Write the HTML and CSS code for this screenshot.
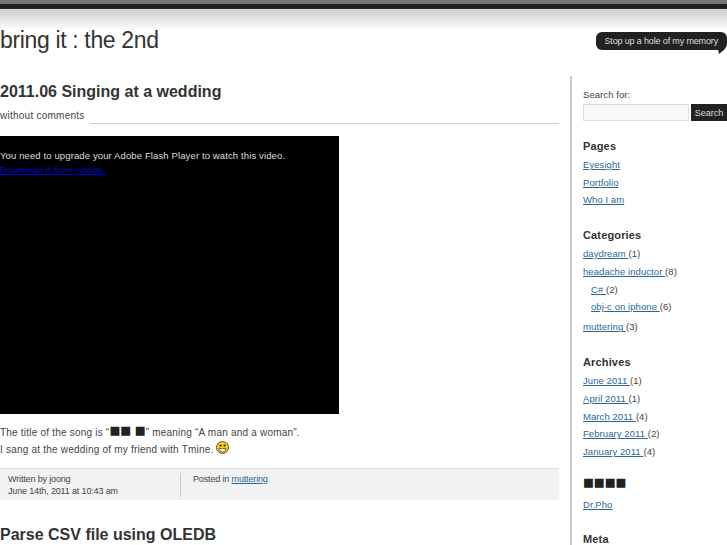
FILE: index.html
```html
<!DOCTYPE html>
<html lang="en">
<head>
<meta charset="utf-8">
<title>bring it : the 2nd</title>
<link rel="stylesheet" href="styles.css">
</head>
<body>
<div class="topbar"></div>
<header class="site-header">
  <h1 class="site-title">bring it : the 2nd</h1>
  <div class="tagline">Stop up a hole of my memory<svg class="tail" width="7" height="5" viewBox="0 0 7 5"><path d="M0 0H7L1 5Z" fill="#222"/></svg></div>
</header>
<div class="columns">
  <main class="content">
    <article class="post">
      <h2 class="post-title">2011.06 Singing at a wedding</h2>
      <div class="post-meta"><span class="comments">without comments</span><span class="rule"></span></div>
      <div class="video">
        <p class="video-msg">You need to upgrade your Adobe Flash Player to watch this video.<br><a href="#" class="video-link">Download it from Adobe.</a></p>
      </div>
      <p class="post-text">The title of the song is “<span class="sq">■■ ■</span>” meaning “A man and a woman”.<br>I sang at the wedding of my friend with Tmine. <svg class="smiley" width="13" height="13" viewBox="0 0 13 13"><circle cx="6.5" cy="6.5" r="6" fill="#f2d21f" stroke="#6b5a10"/><circle cx="4.5" cy="4.5" r="1.1" fill="#222"/><circle cx="8.5" cy="4.5" r="1.1" fill="#222"/><path d="M2.8 7.2Q6.5 8.4 10.2 7.2Q9.4 11 6.5 11Q3.6 11 2.8 7.2Z" fill="#fff" stroke="#333" stroke-width=".7"/></svg></p>
      <footer class="post-foot">
        <div class="foot-left">Written by joong<br>June 14th, 2011 at 10:43 am</div>
        <div class="foot-right">Posted in <a href="#">muttering</a></div>
      </footer>
    </article>
    <h2 class="post-title next">Parse CSV file using OLEDB</h2>
  </main>
  <aside class="sidebar">
    <div class="search-label">Search for:</div>
    <form class="search"><input class="search-input" type="text"><button class="search-btn" type="button">Search</button></form>
    <h3 class="widget-title first">Pages</h3>
    <ul class="list">
      <li><a href="#">Eyesight</a></li>
      <li><a href="#">Portfolio</a></li>
      <li><a href="#">Who I am</a></li>
    </ul>
    <h3 class="widget-title">Categories</h3>
    <ul class="list">
      <li><a href="#">daydream </a> (1)</li>
      <li><a href="#">headache inductor </a> (8)
        <ul class="sublist">
          <li><a href="#">C# </a> (2)</li>
          <li><a href="#">obj-c on iphone </a> (6)</li>
        </ul>
      </li>
      <li><a href="#">muttering </a> (3)</li>
    </ul>
    <h3 class="widget-title">Archives</h3>
    <ul class="list">
      <li><a href="#">June 2011 </a> (1)</li>
      <li><a href="#">April 2011 </a> (1)</li>
      <li><a href="#">March 2011 </a> (4)</li>
      <li><a href="#">February 2011 </a> (2)</li>
      <li><a href="#">January 2011 </a> (4)</li>
    </ul>
    <h3 class="widget-title squares">■■■■</h3>
    <ul class="list">
      <li><a href="#">Dr.Pho</a></li>
    </ul>
    <h3 class="widget-title">Meta</h3>
  </aside>
</div>
</body>
</html>
```
FILE: styles.css
```css
html, body {
  margin: 0;
  height: 545px;
  overflow: hidden;
  background: #fff;
}
body {
  font-family: "Liberation Sans", Arial, sans-serif;
  font-size: 10px;
  color: #444;
}
a { color: #2a6797; }

.topbar {
  height: 9px;
  box-sizing: border-box;
  background: #222;
  border-top: 4px solid #777;
}
.site-header {
  height: 67px;
  box-sizing: border-box;
  border-top: 1px solid #ddd;
  background: linear-gradient(#cfcfcf, #fff 21px);
  background-size: 100% 21px;
  background-repeat: no-repeat;
  display: flex;
  justify-content: space-between;
  align-items: flex-start;
}
.site-title {
  margin: 15px 0 0;
  font-size: 23px;
  line-height: 30px;
  font-weight: normal;
  color: #333;
  letter-spacing: -0.35px;
}
.tagline {
  position: relative;
  margin-top: 22px;
  height: 18px;
  line-height: 18px;
  padding: 0 9px 0 8px;
  background: #222;
  color: #ddd;
  border-radius: 6px;
  font-size: 9px;
  letter-spacing: -0.15px;
  white-space: nowrap;
}
.tail {
  position: absolute;
  right: 2px;
  bottom: -4px;
}

.columns {
  display: flex;
  align-items: flex-start;
}
.content {
  width: 559px;
  flex: none;
}
.post-title {
  margin: 6px 0 0;
  font-size: 16px;
  line-height: 20px;
  font-weight: bold;
  color: #333;
}
.post-meta {
  display: flex;
  margin-top: 6px;
  gap: 5px;
  height: 16px;
  font-size: 10px;
  letter-spacing: 0.25px;
}
.comments { line-height: 16px; }
.rule {
  flex: 1;
  align-self: flex-end;
  border-bottom: 1px solid #ccc;
}
.video {
  width: 339px;
  height: 278px;
  margin-top: 12px;
  background: #000;
  overflow: hidden;
}
.video-msg {
  margin: 13px 0 0;
  color: #ddd;
  font-size: 9.5px;
  line-height: 14px;
  letter-spacing: 0.12px;
}
.video-link { color: #00c; }
.post-text {
  margin: 11px 0 0;
  font-size: 10px;
  line-height: 15.5px;
  letter-spacing: 0.21px;
  height: 43px;
}
.sq {
  font-family: "DejaVu Sans", sans-serif;
  font-size: 11.5px;
  line-height: 10px;
  color: #222;
  letter-spacing: 0;
  vertical-align: 2px;
}
.smiley { vertical-align: -1px; }
.post-foot {
  display: flex;
  box-sizing: border-box;
  height: 32px;
  padding: 4px 0 3px 8px;
  background: #f2f2f2;
  border-top: 1px solid #ddd;
  font-size: 9px;
  line-height: 12px;
  letter-spacing: -0.15px;
}
.foot-left {
  width: 172px;
  border-right: 1px solid #ccc;
}
.foot-right { padding-left: 12px; }
.next { margin-top: 25px; }

.sidebar {
  flex: 1;
  margin-left: 11px;
  border-left: 2px solid #ccc;
  padding: 12px 0 0 11px;
  height: 480px;
  font-size: 9.5px;
  letter-spacing: 0.07px;
}
.search-label { line-height: 13px; }
.search {
  display: flex;
  margin-top: 3px;
  gap: 2px;
}
.search-input {
  box-sizing: border-box;
  width: 106px;
  height: 17px;
  padding: 0;
  margin: 0;
  border: 1px solid #ddd;
  background: #f8f8f8;
}
.search-btn {
  box-sizing: border-box;
  flex: 1;
  height: 17px;
  padding: 0;
  border: 0;
  background: #222;
  color: #ddd;
  font: 9px "Liberation Sans", Arial, sans-serif;
}
.widget-title {
  margin: 19px 0 0;
  font-size: 11px;
  line-height: 14px;
  font-weight: bold;
  color: #333;
  letter-spacing: 0.15px;
}
.first { margin-top: 18px; }
.list, .sublist {
  list-style: none;
  margin: 0;
  padding: 0;
}
.list { margin-top: 3px; }
.list li { line-height: 17.7px; }
.sublist { padding-left: 8px; margin-bottom: 2.5px; }
.squares {
  margin: 14px 0 7px;
  font-family: "DejaVu Sans", sans-serif;
  font-size: 11.5px;
  font-weight: normal;
  color: #222;
  letter-spacing: 0;
}
```
